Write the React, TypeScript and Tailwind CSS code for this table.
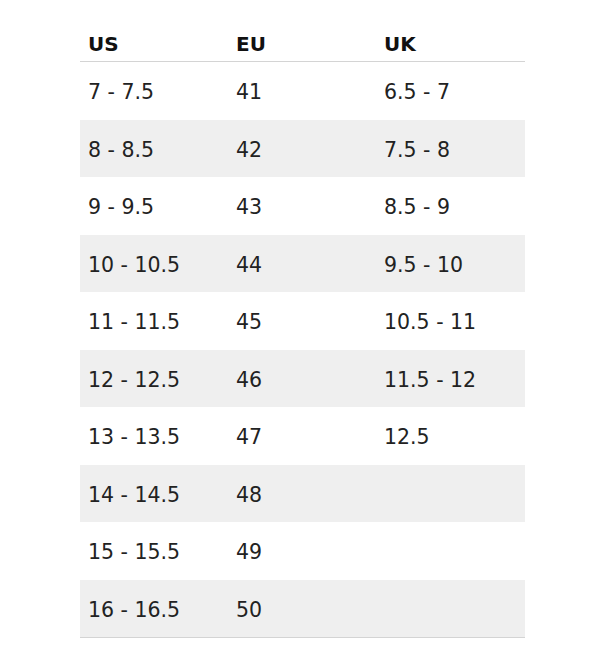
const rows: [string, string, string][] = [
  ['7 - 7.5', '41', '6.5 - 7'],
  ['8 - 8.5', '42', '7.5 - 8'],
  ['9 - 9.5', '43', '8.5 - 9'],
  ['10 - 10.5', '44', '9.5 - 10'],
  ['11 - 11.5', '45', '10.5 - 11'],
  ['12 - 12.5', '46', '11.5 - 12'],
  ['13 - 13.5', '47', '12.5'],
  ['14 - 14.5', '48', ''],
  ['15 - 15.5', '49', ''],
  ['16 - 16.5', '50', ''],
];

export default function App() {
  return (
    <div className="w-[600px] h-[656px] bg-white pt-[25px] font-['DejaVu_Sans',Verdana,sans-serif] text-[#222]">
      <div className="mx-[80px] w-[445px] border-b border-[#d4d4d4]">
        {/* Header */}
        <div className="grid grid-cols-[148px_148px_1fr] h-[37px] items-center border-b border-[#d4d4d4] pt-[2px] text-[20px] font-bold text-[#111]">
          <div className="px-2">US</div>
          <div className="px-2">EU</div>
          <div className="px-2">UK</div>
        </div>

        {rows.map((r, i) => (
          <div
            key={i}
            className={`grid grid-cols-[148px_148px_1fr] h-[57.5px] items-center pt-[4px] text-[20.5px] ${i % 2 === 1 ? 'bg-[#efefef]' : 'bg-white'}`}
          >
            <div className="px-2">{r[0]}</div>
            <div className="px-2">{r[1]}</div>
            <div className="px-2">{r[2]}</div>
          </div>
        ))}
      </div>
    </div>
  );
}
